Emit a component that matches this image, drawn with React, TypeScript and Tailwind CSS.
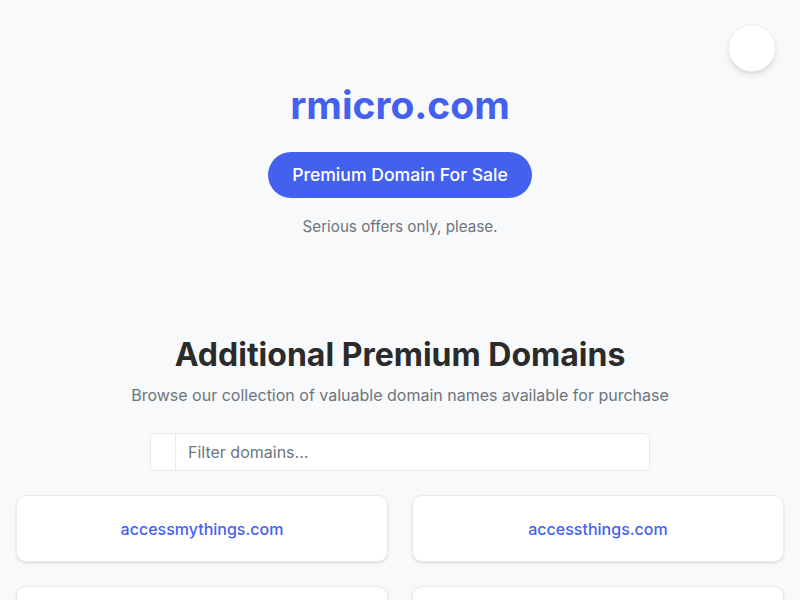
import React, { useState } from 'react';

const domains = [
  'accessmythings.com',
  'accessthings.com',
  'appliedmicro.net',
  'brightledger.com',
  'cloudvantage.io',
  'datakeystone.com',
];

export default function App() {
  const [filter, setFilter] = useState('');
  const shown = domains.filter((d) => d.includes(filter.toLowerCase()));

  return (
    <div
      className="min-h-screen bg-[#f8f9fa] text-[#212529]"
      style={{ fontFamily: 'Inter, "Noto Sans", sans-serif' }}
    >
      <button
        aria-label="Toggle theme"
        className="fixed top-6 right-6 w-12 h-12 rounded-full bg-white border border-[#e9ecef] shadow-md"
      />

      <header className="pt-[81px] flex flex-col items-center text-center">
        <h1 className="text-[39px] leading-[48px] font-bold text-[#4361ee]">rmicro.com</h1>
        <a
          href="#"
          className="mt-[23px] h-[46px] px-6 flex items-center rounded-full bg-[#4361ee] text-white text-[17.6px] font-medium"
        >
          Premium Domain For Sale
        </a>
        <p className="mt-[17px] text-[15.2px] leading-6 text-[#6c757d]">Serious offers only, please.</p>
      </header>

      <section className="mt-[97px] px-4 pb-10">
        <h2 className="text-center text-[32px] leading-[38px] font-bold text-[#2b2b2b]">
          Additional Premium Domains
        </h2>
        <p className="mt-[9px] text-center text-base leading-6 text-[#6c757d]">
          Browse our collection of valuable domain names available for purchase
        </p>

        <div className="mt-[26px] mx-auto w-[500px] h-[38px] flex bg-white border border-[#e9ecef] rounded-md overflow-hidden">
          <span className="w-[25px] border-r border-[#e9ecef]" />
          <input
            value={filter}
            onChange={(e) => setFilter(e.target.value)}
            placeholder="Filter domains..."
            className="flex-1 px-3 text-base text-[#212529] placeholder:text-[#6c757d] outline-none bg-transparent"
          />
        </div>

        <div className="mt-6 grid grid-cols-2 gap-6">
          {shown.map((d) => (
            <a
              key={d}
              href="#"
              className="h-[67px] flex items-center justify-center bg-white border border-[#e9ecef] rounded-[10px] shadow-sm text-base font-medium text-[#4361ee]"
            >
              {d}
            </a>
          ))}
        </div>
      </section>
    </div>
  );
}
